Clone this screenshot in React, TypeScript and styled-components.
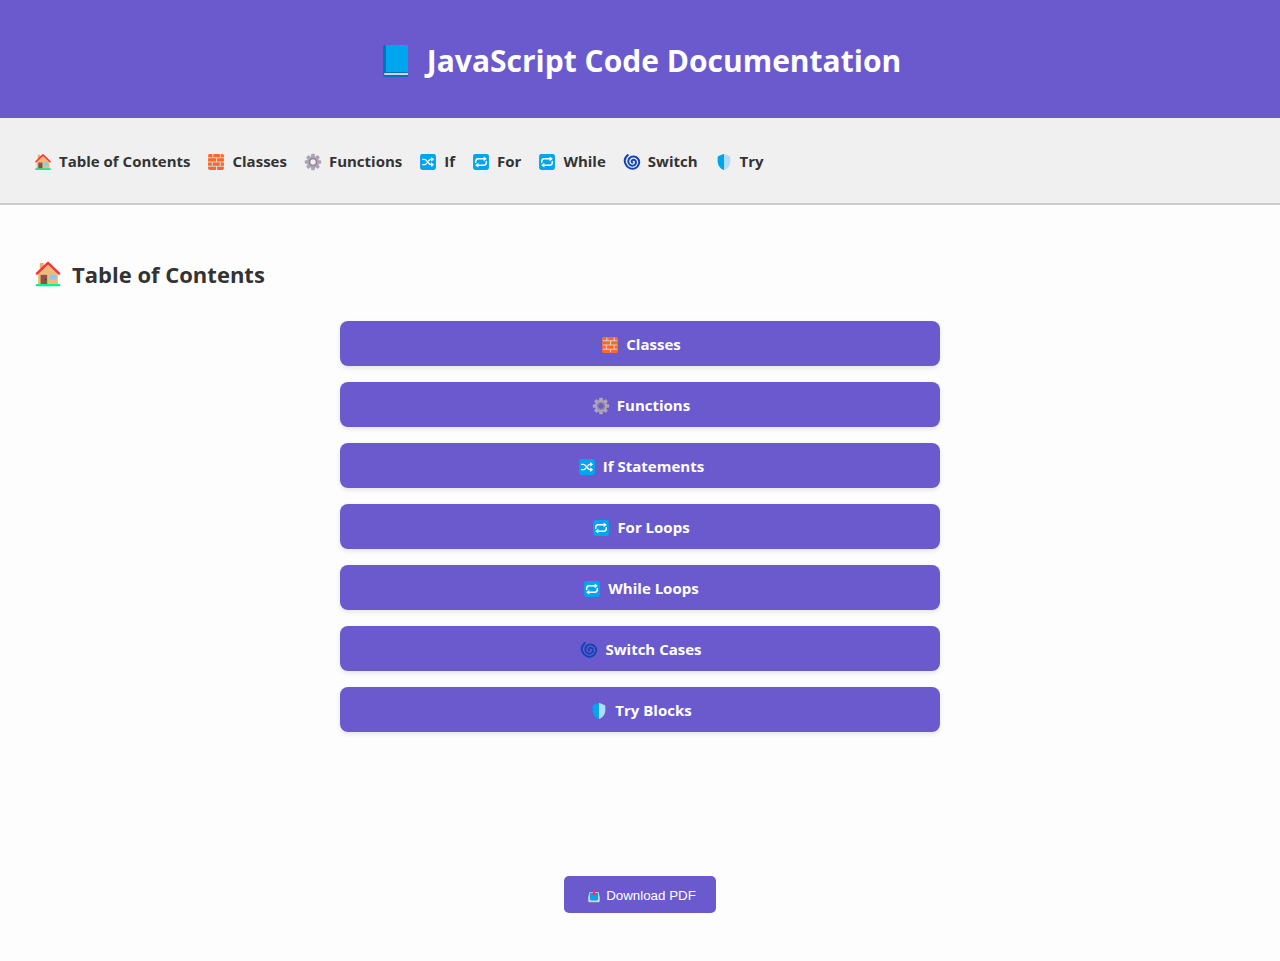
import React from "react";
import styled, { createGlobalStyle } from "styled-components";

const GlobalStyle = createGlobalStyle`
  body {
    margin: 0;
    background: #fdfdfd;
    color: #333;
    font-family: "Segoe UI", "Open Sans", "Noto Sans", sans-serif;
  }
`;

const Header = styled.header`
  display: flex;
  justify-content: center;
  padding: 34px 32px 30px;
  background: #6a5acd;
  color: #fff;
`;

const Title = styled.h1`
  display: flex;
  align-items: center;
  gap: 14px;
  margin: 0;
  font-size: 30px;
  line-height: 54px;
  font-weight: 700;
`;

const Nav = styled.nav`
  display: flex;
  flex-wrap: wrap;
  gap: 17px;
  padding: 33px 34px 31px;
  background: #f0f0f0;
  border-bottom: 2px solid #ccc;
`;

const NavLink = styled.a`
  display: flex;
  align-items: center;
  gap: 7px;
  color: #333;
  font-size: 15px;
  line-height: 21px;
  font-weight: 700;
  text-decoration: none;
`;

const Main = styled.main`
  padding: 53px 34px 0;
`;

const SectionTitle = styled.h2`
  display: flex;
  align-items: center;
  gap: 10px;
  margin: 0 0 31px;
  font-size: 22px;
  line-height: 32px;
  font-weight: 700;
`;

const TocList = styled.ul`
  display: flex;
  flex-direction: column;
  gap: 16px;
  max-width: 600px;
  margin: 0 auto;
  padding: 0;
  list-style: none;
`;

const TocLink = styled.a`
  display: flex;
  align-items: center;
  justify-content: center;
  gap: 7px;
  padding: 13px 11px 11px 13px;
  border-radius: 8px;
  background: #6a5acd;
  box-shadow: 0 2px 5px rgba(0, 0, 0, 0.1);
  color: #fff;
  font-size: 15px;
  line-height: 21px;
  font-weight: 700;
  text-decoration: none;
`;

const Footer = styled.footer`
  display: flex;
  justify-content: center;
  padding: 144px 32px 48px;
`;

const DownloadButton = styled.button`
  display: flex;
  align-items: center;
  gap: 5px;
  padding: 12px 20px 10px 23px;
  border: 0;
  border-radius: 5px;
  background: #6a5acd;
  color: #fff;
  font-family: "Liberation Sans", Arial, sans-serif;
  line-height: 15px;
  cursor: pointer;
`;

const Icon = styled.svg.attrs({ viewBox: "-1 -1 34 34", "aria-hidden": true })<{ $size: number }>`
  flex: none;
  width: ${(p) => p.$size}px;
  height: ${(p) => p.$size}px;
`;

type IconProps = { size?: number };

const Book = ({ size = 18 }: IconProps) => (
  <Icon $size={size}>
    <path d="M5 0h22v32H5a2 2 0 0 1-2-2V2a2 2 0 0 1 2-2Z" fill="#0074ba" />
    <path d="M6 0H28v27H6Z" fill="#00a6ed" />
    <path d="M5 28H28v2H5a1 1 0 0 1 0-2Z" fill="#d3d3d3" />
    <path d="M5 30h23v2H5Z" fill="#0074ba" />
  </Icon>
);

const House = ({ size = 18 }: IconProps) => (
  <Icon $size={size}>
    <path d="M6 3.500a1 1 0 0 1 1-1h3a1 1 0 0 1 1 1V12H6Z" fill="#f3ad61" />
    <path d="M16 4 4 15v14h24V15Z" fill="#efba7b" />
    <path d="M7 17h8v12H7Z" fill="#8c5543" />
    <path d="M18 17h8v6h-8Z" fill="#83cbff" />
    <circle cx="13" cy="23" r=".8" fill="#402a32" />
    <path d="m2.500 15.500 13.500-13 13.500 13" fill="none" stroke="#f92f3a" strokeWidth="2.800" strokeLinecap="round" strokeLinejoin="round" />
    <rect x="1" y="28" width="30" height="3" rx="1.500" fill="#00f397" />
  </Icon>
);

const Bricks = ({ size = 18 }: IconProps) => (
  <Icon $size={size}>
    <rect x="2" y="2" width="28" height="28" rx="2" fill="#d3d3d3" />
    <path
      d="M4 1h5v6H1V4a3 3 0 0 1 3-3ZM11 1h12v6H11ZM25 1h3a3 3 0 0 1 3 3v3h-6ZM1 9h15v6H1ZM18 9h13v6H18ZM1 17h7v6H1ZM10 17h13v6H10ZM25 17h6v6h-6ZM1 25h15v6H4a3 3 0 0 1-3-3ZM18 25h13v3a3 3 0 0 1-3 3H18Z"
      fill="#ff6723"
    />
  </Icon>
);

const Gear = ({ size = 18 }: IconProps) => (
  <Icon $size={size}>
    <g fill="#aea4b8">
      {[0, 45, 90, 135, 180, 225, 270, 315].map((angle) => (
        <rect key={angle} x="12.500" y="0.500" width="7" height="8" rx="1.500" transform={`rotate(${angle} 16 16)`} />
      ))}
    </g>
    <circle cx="16" cy="16" r="8.500" fill="none" stroke="#aea4b8" strokeWidth="6" />
    <circle cx="16" cy="16" r="6.500" fill="none" stroke="#8f8499" strokeWidth="2.500" />
  </Icon>
);

const Shuffle = ({ size = 18 }: IconProps) => (
  <Icon $size={size}>
    <rect x="1" y="1" width="30" height="30" rx="4" fill="#00a6ed" />
    <g fill="none" stroke="#fff" strokeWidth="2.600" strokeLinecap="round">
      <path d="M6 11h3c6 0 7 10 13 10h1M6 21h3c2 0 3.500-1 4.500-2.500M17.500 13.500C18.500 12 20 11 22 11h1" />
    </g>
    <path d="m22 6.500 5.500 4.500-5.500 4.500ZM22 16.500l5.500 4.500-5.500 4.500Z" fill="#fff" />
  </Icon>
);

const Repeat = ({ size = 18 }: IconProps) => (
  <Icon $size={size}>
    <rect x="1" y="1" width="30" height="30" rx="4" fill="#00a6ed" />
    <path
      d="M6 17v-2a5 5 0 0 1 5-5h11M26 15v2a5 5 0 0 1-5 5H10"
      fill="none"
      stroke="#fff"
      strokeWidth="2.800"
      strokeLinecap="round"
    />
    <path d="m21 5.500 6 4.500-6 4.500ZM11 17.500 5 22l6 4.500Z" fill="#fff" />
  </Icon>
);

const Cyclone = ({ size = 18 }: IconProps) => (
  <Icon $size={size}>
    <path
      d="M8 3C3 7 1 13 3.500 19c3 8 12 12 19 8.500 7-3.500 9-12 5-17.500-4-5.500-12-6-16-1.500-4 4.500-3 11 1.500 13.500 4.500 2.500 10 0 10.500-4.500.4-4-3-6.500-6-5.500-2.500 1-3 4-1 5"
      fill="none"
      stroke="#1345b7"
      strokeWidth="3.800"
      strokeLinecap="round"
    />
  </Icon>
);

const Shield = ({ size = 18 }: IconProps) => (
  <Icon $size={size}>
    <path d="M16 1C13 1 10.500 3.500 6 4.500 4.500 5 4 6 4 7.500V14c0 8 5 15 12 17Z" fill="#00a6ed" />
    <path d="M16 1c3 0 5.500 2.500 10 3.500 1.500.5 2 1.500 2 3V14c0 8-5 15-12 17Z" fill="#aeddff" />
  </Icon>
);

const Inbox = ({ size = 18 }: IconProps) => (
  <Icon $size={size}>
    <path d="M5 6h22l3 13v9a3 3 0 0 1-3 3H5a3 3 0 0 1-3-3v-9Z" fill="#d3d3d3" />
    <path d="M6 8h20v14c0 3-2 5-5 5H11c-3 0-5-2-5-5Z" fill="#00a6ed" />
    <path d="M13.500 1h5v8h4L16 16 9.500 9h4Z" fill="#f92f60" />
  </Icon>
);

const navItems = [
  { href: "#toc", label: "Table of Contents", Glyph: House },
  { href: "#classes", label: "Classes", Glyph: Bricks },
  { href: "#functions", label: "Functions", Glyph: Gear },
  { href: "#if", label: "If", Glyph: Shuffle },
  { href: "#for", label: "For", Glyph: Repeat },
  { href: "#while", label: "While", Glyph: Repeat },
  { href: "#switch", label: "Switch", Glyph: Cyclone },
  { href: "#try", label: "Try", Glyph: Shield },
];

const tocItems = [
  { href: "#classes", label: "Classes", Glyph: Bricks },
  { href: "#functions", label: "Functions", Glyph: Gear },
  { href: "#if", label: "If Statements", Glyph: Shuffle },
  { href: "#for", label: "For Loops", Glyph: Repeat },
  { href: "#while", label: "While Loops", Glyph: Repeat },
  { href: "#switch", label: "Switch Cases", Glyph: Cyclone },
  { href: "#try", label: "Try Blocks", Glyph: Shield },
];

export default function App() {
  return (
    <>
      <GlobalStyle />
      <Header>
        <Title>
          <Book size={34} />
          JavaScript Code Documentation
        </Title>
      </Header>
      <Nav>
        {navItems.map(({ href, label, Glyph }) => (
          <NavLink key={href} href={href}>
            <Glyph />
            {label}
          </NavLink>
        ))}
      </Nav>
      <Main>
        <SectionTitle id="toc">
          <House size={28} />
          Table of Contents
        </SectionTitle>
        <TocList>
          {tocItems.map(({ href, label, Glyph }) => (
            <li key={href}>
              <TocLink href={href}>
                <Glyph />
                {label}
              </TocLink>
            </li>
          ))}
        </TocList>
      </Main>
      <Footer>
        <DownloadButton type="button">
          <Inbox size={14} />
          Download PDF
        </DownloadButton>
      </Footer>
    </>
  );
}
